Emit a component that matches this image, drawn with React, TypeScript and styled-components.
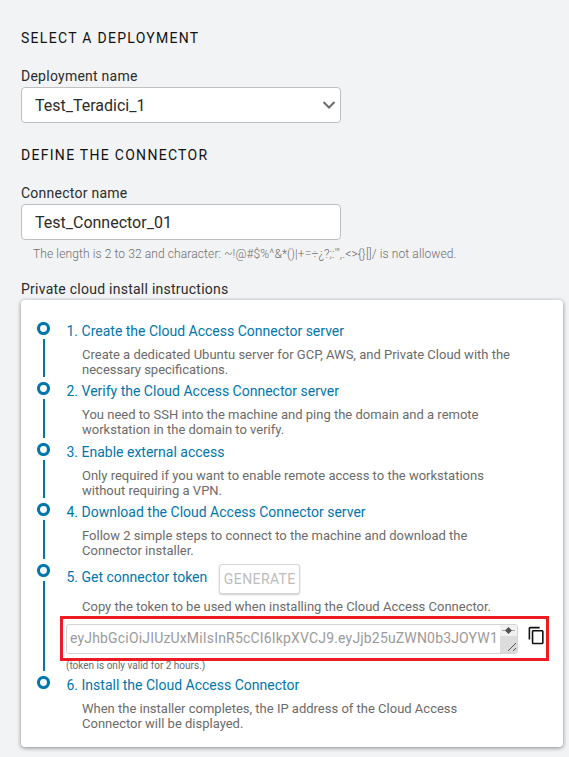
import React from "react";
import styled, { createGlobalStyle } from "styled-components";

const GlobalStyle = createGlobalStyle`
  *, *::before, *::after { box-sizing: border-box; }
  body {
    margin: 0;
    background: #f2f3f5;
    font-family: Roboto, "Liberation Sans", sans-serif;
    overflow: hidden;
  }
`;

const Page = styled.main`
  height: 757px;
  padding: 30px 6px 0 21px;
  color: #2b2b2b;
  overflow: hidden;
`;

const Section = styled.section`
  height: 117px;
`;

const Heading = styled.h2`
  margin: 0 0 20px;
  font-size: 14px;
  line-height: 17px;
  font-weight: 400;
  letter-spacing: 1.29px;
  color: #111;
`;

const Label = styled.label`
  display: block;
  height: 20px;
  font-size: 14px;
  line-height: 18px;
  letter-spacing: 0.25px;
`;

const Control = styled.div`
  display: flex;
  align-items: center;
  justify-content: space-between;
  width: 320px;
  height: 36px;
  padding: 0 4px 0 13px;
  border: 1px solid #bfbfbf;
  border-radius: 4px;
  background: #fff;
  font-size: 16px;
`;

const Hint = styled.p`
  margin: 6px 0 0 12px;
  height: 34px;
  font-size: 12px;
  line-height: 16px;
  font-weight: 300;
  letter-spacing: 0.11px;
  white-space: nowrap;
  color: #6e6e6e;
`;

const Card = styled.ol`
  width: 542px;
  height: 447px;
  margin: 0;
  padding: 22px 16px 0;
  list-style: none;
  background: #fff;
  border-radius: 4px;
  box-shadow: 0 1px 4px rgba(0, 0, 0, 0.45);
`;

const StepRow = styled.li<{ $height: number }>`
  display: grid;
  grid-template-columns: 13px 1fr;
  column-gap: 16px;
  height: ${(p) => p.$height}px;
`;

const Rail = styled.div`
  display: flex;
  flex-direction: column;
  align-items: center;
  padding-bottom: 5px;
`;

const Dot = styled.svg`
  flex: none;
  display: block;
`;

const Line = styled.span`
  flex: 1;
  width: 2px;
  margin: 4px 0 0 1px;
  background: #0076ad;
`;

const Title = styled.div<{ $tall?: boolean }>`
  display: flex;
  align-items: center;
  height: ${(p) => (p.$tall ? 30 : 18)}px;
  padding-bottom: ${(p) => (p.$tall ? 5 : 0)}px;
  padding-left: 0.5px;
  font-size: 14px;
  line-height: 18px;
  white-space: nowrap;
  color: #0076ad;
`;

const Description = styled.p<{ $tall?: boolean }>`
  margin: ${(p) => (p.$tall ? 5 : 7)}px 0 0 16px;
  font-size: 13px;
  line-height: 15px;
  white-space: pre;
  color: #6b6b6b;
`;

const GenerateButton = styled.button`
  width: 81px;
  height: 30px;
  margin: 5px 0 0 12px;
  padding: 0 0 1px;
  border: 1px solid #d6d6d6;
  border-radius: 3px;
  background: #fff;
  box-shadow: 0 1px 2px rgba(0, 0, 0, 0.2);
  font: 400 14px Roboto, sans-serif;
  letter-spacing: 0.4px;
  color: #bdbdbd;
`;

const TokenRow = styled.div`
  position: relative;
  display: flex;
  align-items: flex-start;
  margin-top: 10px;
`;

const Highlight = styled.span`
  position: absolute;
  inset: -8px auto auto -6px;
  width: 489px;
  height: 45px;
  border: 3px solid #ed1c24;
`;

const TokenField = styled.div`
  display: flex;
  justify-content: space-between;
  width: 452px;
  height: 30px;
  padding-left: 3px;
  border: 1px solid #d4d4d4;
  border-radius: 3px;
  overflow: hidden;
  font-size: 14px;
  line-height: 27px;
  letter-spacing: 0.17px;
  white-space: nowrap;
  color: #9b9b9b;
`;

const ScrollGrip = styled.svg`
  flex: none;
`;

const CopyIcon = styled.svg`
  margin: 2px 0 0 9px;
`;

const Note = styled.div`
  margin-top: 6px;
  font-size: 10px;
  line-height: 12px;
  color: #6b6b6b;
`;

type Step = { title: string; text: string; height: number; token?: boolean };

const steps: Step[] = [
  {
    title: "1. Create the Cloud Access Connector server",
    text: "Create a dedicated Ubuntu server for GCP, AWS, and Private Cloud with the\nnecessary specifications.",
    height: 60,
  },
  {
    title: "2. Verify the Cloud Access Connector server",
    text: "You need to SSH into the machine and ping the domain and a remote\nworkstation in the domain to verify.",
    height: 61,
  },
  {
    title: "3. Enable external access",
    text: "Only required if you want to enable remote access to the workstations\nwithout requiring a VPN.",
    height: 60,
  },
  {
    title: "4. Download the Cloud Access Connector server",
    text: "Follow 2 simple steps to connect to the machine and download the\nConnector installer.",
    height: 61,
  },
  {
    title: "5. Get connector token",
    text: "Copy the token to be used when installing the Cloud Access Connector.",
    height: 112,
    token: true,
  },
  {
    title: "6. Install the Cloud Access Connector",
    text: "When the installer completes, the IP address of the Cloud Access\nConnector will be displayed.",
    height: 60,
  },
];

const Token = () => (
  <>
    <TokenRow>
      <TokenField>
        <span>eyJhbGciOiJIUzUxMiIsInR5cCI6IkpXVCJ9.eyJjb25uZWN0b3JOYW1</span>
        <ScrollGrip width="17" height="28" viewBox="0 0 17 28">
          <path d="M0 0h17v28H0z" fill="#dcdcdc" />
          <path d="M0 0h17v11H0z" fill="#f1f1f1" />
          <path d="M2 5.5h13" stroke="#a3a3a3" />
          <path d="M5.500 5l3-3 3 3v1l-3 3-3-3z" fill="#505050" />
          <path d="M8 26l8-8M13 26l3-3" stroke="#555" fill="none" />
        </ScrollGrip>
      </TokenField>
      <CopyIcon width="19" height="19" viewBox="0 0 24 24" fill="#111">
        <path d="M16 1H4c-1.100 0-2 .9-2 2v14h2V3h12V1zm3 4H8c-1.100 0-2 .9-2 2v14c0 1.100.9 2 2 2h11c1.100 0 2-.9 2-2V7c0-1.100-.9-2-2-2zm0 16H8V7h11v14z" />
      </CopyIcon>
      <Highlight />
    </TokenRow>
    <Note>(token is only valid for 2 hours.)</Note>
  </>
);

export default function App() {
  return (
    <>
      <GlobalStyle />
      <Page>
        <Section>
          <Heading>SELECT A DEPLOYMENT</Heading>
          <Label>Deployment name</Label>
          <Control>
            Test_Teradici_1
            <svg width="14" height="10" viewBox="0 0 14 10" fill="none">
              <path d="M1.500 2L7 7.500 12.500 2" stroke="#6b6b6b" strokeWidth="2" />
            </svg>
          </Control>
        </Section>
        <Heading>DEFINE THE CONNECTOR</Heading>
        <Label>Connector name</Label>
        <Control>Test_Connector_01</Control>
        <Hint>{`The length is 2 to 32 and character: ~!@#$%^&*()|+=÷¿?;:'",.<>{}[]/ is not allowed.`}</Hint>
        <Label>Private cloud install instructions</Label>
        <Card>
          {steps.map((step, i) => (
            <StepRow key={step.title} $height={step.height}>
              <Rail>
                <Dot width="13" height="13" viewBox="0 0 13 13">
                  <circle cx="6.5" cy="6.5" r="5" fill="#fff" stroke="#0076ad" strokeWidth="3.1" />
                </Dot>
                {i < steps.length - 1 && <Line />}
              </Rail>
              <div>
                <Title $tall={step.token}>
                  {step.title}
                  {step.token && <GenerateButton disabled>GENERATE</GenerateButton>}
                </Title>
                <Description $tall={step.token}>{step.text}</Description>
                {step.token && <Token />}
              </div>
            </StepRow>
          ))}
        </Card>
      </Page>
    </>
  );
}
